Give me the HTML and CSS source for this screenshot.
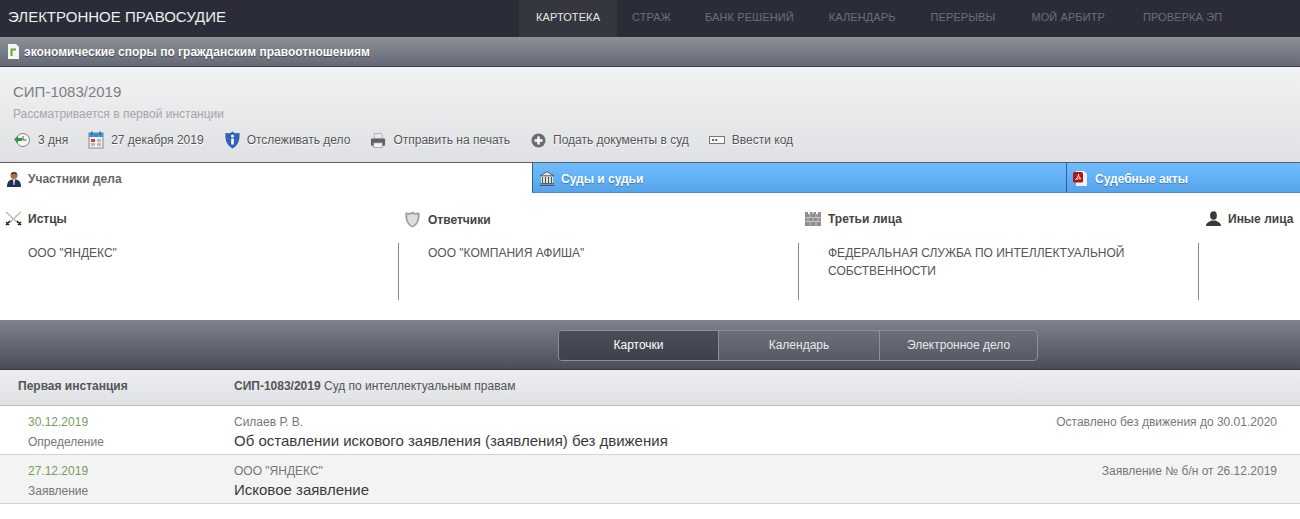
FILE: index.html
```html
<!DOCTYPE html>
<html lang="ru">
<head>
  <meta charset="UTF-8">
  <title>Электронное правосудие</title>
  <link rel="stylesheet" href="styles.css">
</head>
<body>

<!-- Верхняя панель -->
<header class="topbar">
  <div class="logo">ЭЛЕКТРОННОЕ ПРАВОСУДИЕ</div>
  <nav class="topnav">
    <a class="active">КАРТОТЕКА</a>
    <a>СТРАЖ</a>
    <a>БАНК РЕШЕНИЙ</a>
    <a>КАЛЕНДАРЬ</a>
    <a>ПЕРЕРЫВЫ</a>
    <a>МОЙ АРБИТР</a>
    <a>ПРОВЕРКА ЭП</a>
  </nav>
</header>

<div class="category">
  <svg width="12" height="15" viewBox="0 0 12 15"><path d="M1 0h8l3 3v12H1z" fill="#f2f6ee"/><path d="M3.500 4.500h5.500v2H5.500v5.500h-2z" fill="#6fa53a"/></svg>
  <span>экономические споры по гражданским правоотношениям</span>
</div>

<!-- Шапка дела -->
<section class="case-head">
  <div class="case-num">СИП-1083/2019</div>
  <div class="case-status">Рассматривается в первой инстанции</div>
  <div class="case-actions">
    <span class="action">
      <svg width="18" height="18" viewBox="0 0 18 18"><circle cx="10" cy="9" r="6.500" fill="#f6f7f3" stroke="#7d877d"/><path d="M10 5v4h3.500" fill="none" stroke="#555" stroke-width="1"/><path d="M1 8.500l4-4V7h4v3H5v2.500z" fill="#2f9a2f"/></svg>
      3 дня
    </span>
    <span class="action">
      <svg width="16" height="18" viewBox="0 0 16 18"><rect x="1" y="2" width="14" height="15" fill="#f2f2ee" stroke="#8a8a80"/><rect x="1" y="2" width="14" height="4" fill="#3d8fd8"/><path d="M4 0.500v3M12 0.500v3" stroke="#2c5f96" stroke-width="1.400"/><rect x="3" y="8" width="4" height="3" fill="#c8453c"/><rect x="3" y="12" width="4" height="3" fill="#bbb"/><rect x="9" y="8" width="4" height="3" fill="#bbb"/><rect x="9" y="12" width="4" height="3" fill="#bbb"/></svg>
      27 декабря 2019
    </span>
    <span class="action">
      <svg width="15" height="18" viewBox="0 0 15 18"><path d="M7.500 0.500l2.500 1.800 4.500-.3c.4 6.500-.8 12-7 15.500C1.300 14-.1 8.500.5 2l4.500.3z" fill="#3560b8"/><circle cx="7.500" cy="5" r="1.500" fill="#fff"/><rect x="6.200" y="7.500" width="2.600" height="6" fill="#fff"/></svg>
      Отслеживать дело
    </span>
    <span class="action">
      <svg width="16" height="17" viewBox="0 0 17 17"><path d="M4.500 1h7l1.500 1.500V7H4.500z" fill="#e9e9e9" stroke="#999" stroke-width=".7"/><rect x="1" y="6.500" width="15" height="7.500" rx="1" fill="#5f6266"/><rect x="4" y="11" width="9" height="5" fill="#f3f3f3" stroke="#888" stroke-width=".7"/></svg>
      Отправить на печать
    </span>
    <span class="action">
      <svg width="15" height="15" viewBox="0 0 15 15"><circle cx="7.500" cy="7.500" r="7" fill="#6a6d70"/><path d="M7.500 3.500v8M3.500 7.500h8" stroke="#fff" stroke-width="2.400"/></svg>
      Подать документы в суд
    </span>
    <span class="action">
      <svg width="16" height="8" viewBox="0 0 16 8"><rect x=".5" y=".5" width="15" height="7" fill="#f6f6f6" stroke="#777"/><circle cx="4" cy="4" r="1.100" fill="#444"/><circle cx="7.300" cy="4" r="1.100" fill="#444"/></svg>
      Ввести код
    </span>
  </div>
</section>

<!-- Вкладки -->
<div class="tabs">
  <div class="tab tab-active tab-a">
    <svg width="16" height="16" viewBox="0 0 16 16"><circle cx="8" cy="4.500" r="3.500" fill="#a9703f"/><path d="M4.700 3.500C5 .5 11 .5 11.300 3.500 9 2.500 7 2.500 4.700 3.500z" fill="#3a2a20"/><path d="M1 16c0-5 2-7 5-7.500h4c3 .5 5 2.500 5 7.500z" fill="#1f3358"/><path d="M7 8.500h2L8.500 14h-1z" fill="#e8e8e8"/></svg>
    Участники дела
  </div>
  <div class="tab tab-b">
    <svg width="16" height="15" viewBox="0 0 16 15"><path d="M8 .7L1 4.800h14z" fill="#efe6cf" stroke="#4a5560" stroke-width=".9"/><rect x="2" y="5.500" width="12" height="6.500" fill="#efe6cf"/><path d="M3.500 6v6M6.500 6v6M9.500 6v6M12.500 6v6" stroke="#4a5560" stroke-width="1.100"/><path d="M1.500 12.700h13M.5 14.500h15" stroke="#4a5560"/></svg>
    Суды и судьи
  </div>
  <div class="tab tab-c">
    <svg width="14" height="15" viewBox="0 0 14 15"><path d="M3 0h8l3 3v12H3z" fill="#f1f1f1"/><rect y="1" width="10" height="10.500" rx="1.500" fill="#b3151c"/><path d="M2.500 8.500C4.500 7 5.500 5 5.500 3c0 2 1 3.800 2.500 4.800-2-.3-3.800 0-5.500.7z" fill="none" stroke="#fff" stroke-width=".9"/></svg>
    Судебные акты
  </div>
</div>

<!-- Участники -->
<section class="parties">
  <div class="party">
    <h3>
      <svg width="17" height="15" viewBox="0 0 17 15"><path d="M1 1l12 11M16 1L4 12" stroke="#b4b8bc" stroke-width="1.300"/><path d="M1 14l4-4M16 14l-4-4M1 11l3 3M16 11l-3 3" stroke="#222" stroke-width="1.500"/></svg>
      Истцы
    </h3>
    <div class="party-list">ООО "ЯНДЕКС"</div>
  </div>
  <div class="party">
    <h3>
      <svg width="15" height="17" viewBox="0 0 15 17"><path d="M7.500.5l2.500 1.500 4.500-.5c.5 7-.8 12-7 15-6.200-3-7.500-8-7-15l4.500.5z" fill="#9a9c9e"/><path d="M7.500 2.500l2 1.200 3.300-.3c.2 5-.8 9-5.300 11.500-4.500-2.500-5.500-6.500-5.300-11.500l3.300.3z" fill="#dcdddd"/></svg>
      Ответчики
    </h3>
    <div class="party-list">ООО "КОМПАНИЯ АФИША"</div>
  </div>
  <div class="party">
    <h3>
      <svg width="16" height="14" viewBox="0 0 16 14"><path d="M0 0h3v2h2V0h2.500v2h1V0H11v2h2V0h3v14H0z" fill="#8e8e8e"/><path d="M0 5.500h16M0 9.500h16M5 2v3.500M11 2v3.500M3 5.500v4M8 5.500v4M13 5.500v4M5 9.500V14M11 9.500V14" stroke="#cfcfcf" stroke-width=".8"/></svg>
      Третьи лица
    </h3>
    <div class="party-list">ФЕДЕРАЛЬНАЯ СЛУЖБА ПО ИНТЕЛЛЕКТУАЛЬНОЙ СОБСТВЕННОСТИ</div>
  </div>
  <div class="party">
    <h3>
      <svg class="ico-other" width="15" height="15" viewBox="0 0 15 15"><ellipse cx="7.500" cy="4.500" rx="3.400" ry="4.300" fill="#3a3a3a"/><path d="M0 15c0-1 .5-3 2.500-4l3-1.500h4l3 1.500c2 1 2.500 3 2.500 4z" fill="#3a3a3a"/></svg>
      Иные лица
    </h3>
  </div>
</section>

<!-- Переключатель -->
<div class="switchbar">
  <div class="switch">
    <span class="switch-item on">Карточки</span>
    <span class="switch-item mid">Календарь</span>
    <span class="switch-item">Электронное дело</span>
  </div>
</div>

<!-- Хронология -->
<div class="inst-head">
  <div class="col-left">Первая инстанция</div>
  <div class="inst-court"><b>СИП-1083/2019</b> Суд по интеллектуальным правам</div>
</div>

<div class="row">
  <div class="col-left row-left">
    <div class="row-date">30.12.2019</div>
    <div class="row-type">Определение</div>
  </div>
  <div class="row-main">
    <div class="row-who"><span>Силаев Р. В.</span><span>Оставлено без движения до 30.01.2020</span></div>
    <div class="row-title">Об оставлении искового заявления (заявления) без движения</div>
  </div>
</div>
<div class="row row-alt">
  <div class="col-left row-left">
    <div class="row-date">27.12.2019</div>
    <div class="row-type">Заявление</div>
  </div>
  <div class="row-main">
    <div class="row-who"><span>ООО "ЯНДЕКС"</span><span>Заявление № б/н от 26.12.2019</span></div>
    <div class="row-title">Исковое заявление</div>
  </div>
</div>

</body>
</html>
```

FILE: styles.css
```css
body {
  margin: 0;
  font-family: "Liberation Sans", Arial, sans-serif;
  font-size: 12px;
  color: #333;
  background: #fff;
  overflow: hidden;
}

svg {
  flex: none;
}

/* Верхняя панель */
.topbar {
  display: flex;
  justify-content: space-between;
  height: 37px;
  background: #2a2d38;
}

.logo {
  padding-left: 8px;
  line-height: 34px;
  font-size: 15px;
  color: #eeeeee;
}

.topnav {
  display: flex;
  width: 781px;
}

.topnav a {
  padding: 0 18px 0 17px;
  line-height: 34px;
  font-size: 11px;
  letter-spacing: 0.1px;
  color: #6b6e78;
}

.topnav a.active {
  padding: 0 17px;
  background: #34373f;
  color: #e8e8e8;
}

.topnav a.active + a {
  padding: 0 17px 0 15px;
}

.topnav a:nth-child(5) {
  padding-right: 19px;
}

.topnav a:nth-child(6) {
  padding-right: 21px;
}

.category {
  display: flex;
  align-items: center;
  gap: 5px;
  height: 29px;
  padding-left: 7px;
  border-bottom: 1px solid #3a3d48;
  background: linear-gradient(#8b9199, #656975);
  font-weight: bold;
  color: #fff;
  text-shadow: 0 1px 1px #444;
}

/* Шапка дела */
.case-head {
  height: 95px;
  padding-left: 13px;
  border-bottom: 1px solid #5c5e62;
  background: linear-gradient(#f1f2f3, #dfe1e4);
}

.case-num {
  padding-top: 16px;
  font-size: 15px;
  line-height: 18px;
  color: #7d7f82;
}

.case-status {
  padding-top: 6px;
  line-height: 14px;
  color: #a5a7aa;
}

.case-actions {
  display: flex;
  align-items: center;
  gap: 20px;
  padding-top: 10px;
  color: #555;
  text-shadow: 0 1px 0 #fff;
}

.action {
  display: flex;
  align-items: center;
  gap: 7px;
  height: 18px;
}

.action:nth-child(3),
.action:nth-child(5) {
  margin-left: 1px;
}

/* Вкладки */
.tabs {
  display: flex;
  height: 30px;
}

.tab {
  display: flex;
  align-items: center;
  gap: 6px;
  box-sizing: border-box;
  padding: 2px 0 0 6px;
  border-left: 1px solid #34608c;
  border-bottom: 1px solid #4d8fca;
  background: linear-gradient(#70bcff, #55a5ec);
  font-weight: bold;
  color: #fff;
  text-shadow: 0 1px 1px #3a78b0;
}

.tab-active {
  background: #fff;
  border: 0;
  color: #666;
  text-shadow: none;
}

.tab-a { width: 532px; }
.tab-b { width: 534px; }
.tab-c { width: 234px; gap: 8px; }

/* Участники */
.parties {
  display: grid;
  grid-template-columns: 400px 400px 400px 100px;
  height: 127px;
}

.party h3 {
  display: grid;
  grid-template-columns: 23px 1fr;
  align-items: center;
  margin: 0;
  padding: 18px 0 0 5px;
  height: 15px;
  font-size: 12px;
  color: #444;
}

.ico-other {
  margin-left: 1px;
}

.party-list {
  box-sizing: border-box;
  height: 57px;
  margin: 17px 1px 0 0;
  padding: 1px 60px 0 28px;
  border-right: 1px solid #888;
  line-height: 18px;
  color: #555;
}

/* Переключатель */
.switchbar {
  box-sizing: border-box;
  height: 50px;
  padding: 10px 0 0 558px;
  border-bottom: 1px solid #33363e;
  background: linear-gradient(#7e828d, #4a4e58);
}

.switch {
  display: flex;
  box-sizing: border-box;
  width: 480px;
  height: 31px;
  border: 1px solid #8b8f98;
  border-radius: 4px;
  background: linear-gradient(#6c707b, #565a65);
}

.switch-item {
  box-sizing: border-box;
  flex: 1;
  line-height: 29px;
  text-align: center;
  color: #e8e8e8;
  border-left: 1px solid #8b8f98;
}

.switch-item.on {
  flex: none;
  width: 159px;
  border-left: 0;
  border-radius: 3px 0 0 3px;
  background: linear-gradient(#4a4e58, #3e414b);
  color: #fff;
}

.switch-item.mid {
  flex: none;
  width: 161px;
}

/* Хронология */
.inst-head {
  display: flex;
  height: 35px;
  line-height: 32px;
  border-bottom: 1px solid #b8babd;
  background: linear-gradient(#eceef0, #dfe1e4);
}

.col-left {
  box-sizing: border-box;
  width: 234px;
  padding-left: 18px;
  font-weight: bold;
  color: #555;
}

.inst-court {
  color: #555;
}

.row {
  display: flex;
  height: 48px;
  border-bottom: 1px solid #d4d4d4;
}

.row-alt {
  background: #f3f3f3;
}

.row-left {
  padding-left: 28px;
  font-weight: normal;
}

.row-date {
  padding-top: 9px;
  line-height: 14px;
  color: #789c5c;
}

.row-type {
  padding-top: 6px;
  line-height: 14px;
  color: #777;
}

.row-main {
  flex: 1;
  padding-right: 23px;
}

.row-who {
  display: flex;
  justify-content: space-between;
  padding-top: 9px;
  line-height: 14px;
  color: #777;
}

.row-title {
  padding-top: 3px;
  font-size: 15px;
  line-height: 18px;
  color: #3a3a3a;
}
```
